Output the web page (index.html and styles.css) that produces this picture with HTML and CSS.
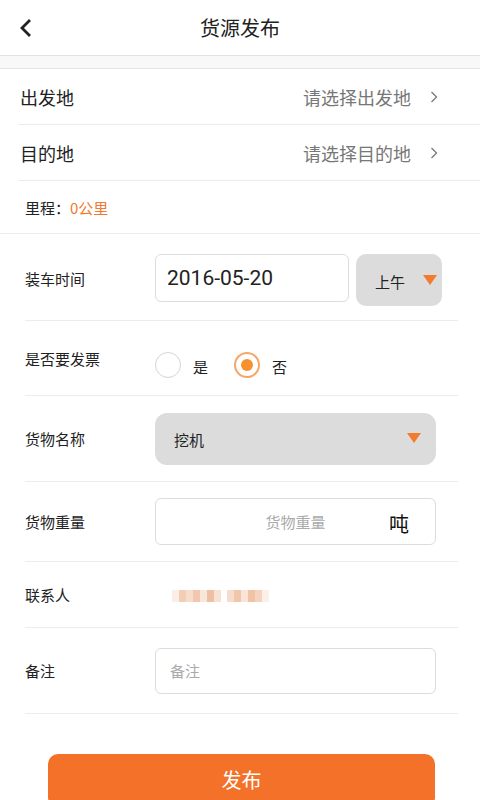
FILE: index.html
```html
<!DOCTYPE html>
<html lang="zh-CN">
<head>
  <meta charset="UTF-8" />
  <meta name="viewport" content="width=device-width, initial-scale=1.0" />
  <title>货源发布</title>
  <link rel="stylesheet" href="styles.css">
</head>
<body>
  <header class="topbar">
    <svg class="back" width="14" height="20" viewBox="0 0 14 20"><path d="M11 2 L3 10 L11 18" fill="none" stroke="#222" stroke-width="2.8"/></svg>
    <h1>货源发布</h1>
  </header>
  <div class="spacer"></div>

  <div class="addr">
    <div class="addr-row">
      <span>出发地</span>
      <span class="pick">请选择出发地
        <svg width="8" height="12" viewBox="0 0 8 12"><path d="M1.5 1 L6.5 6 L1.5 11" fill="none" stroke="#777" stroke-width="1.3"/></svg>
      </span>
    </div>
    <div class="addr-row">
      <span>目的地</span>
      <span class="pick">请选择目的地
        <svg width="8" height="12" viewBox="0 0 8 12"><path d="M1.5 1 L6.5 6 L1.5 11" fill="none" stroke="#777" stroke-width="1.3"/></svg>
      </span>
    </div>
  </div>
  <div class="distance">里程：<span class="orange">0公里</span></div>

  <form class="form">
    <div class="row row-time">
      <label>装车时间</label>
      <div class="box date">2016-05-20</div>
      <div class="select half">上午 <i class="tri"></i></div>
    </div>
    <div class="row row-bill">
      <label>是否要发票</label>
      <div class="radios">
        <span class="radio"></span><span class="opt">是</span>
        <span class="radio on"></span><span class="opt">否</span>
      </div>
    </div>
    <div class="row row-name">
      <label>货物名称</label>
      <div class="select wide">挖机 <i class="tri"></i></div>
    </div>
    <div class="row row-weight">
      <label>货物重量</label>
      <div class="box weight"><span class="ph">货物重量</span><span class="unit">吨</span></div>
    </div>
    <div class="row row-contact">
      <label>联系人</label>
      <div class="blur">
        <i style="background:#fbeee6"></i><i style="background:#f4cdb6"></i><i style="background:#f7dccb"></i><i style="background:#f3c7ad"></i><i style="background:#f9e6da"></i><i style="background:#efbfa3"></i><i style="background:#f8e2d4"></i><i class="sp"></i><i style="background:#f7dccb"></i><i style="background:#f2c6ab"></i><i style="background:#f9e4d7"></i><i style="background:#f0c3a7"></i><i style="background:#f5d3bf"></i><i style="background:#fbefe7"></i>
      </div>
    </div>
    <div class="row row-note">
      <label>备注</label>
      <div class="box note"><span class="ph">备注</span></div>
    </div>
  </form>

  <button class="submit" type="button">发布</button>
</body>
</html>
```

FILE: styles.css
```css
body {
  margin: 0;
  background: #fff;
  font-family: "Noto Sans CJK SC", "Noto Sans", sans-serif;
  color: #333;
  width: 480px;
  overflow: hidden;
}
.topbar {
  height: 55px;
  display: flex;
  align-items: center;
  justify-content: center;
  position: relative;
  border-bottom: 1px solid #e2e2e2;
}
.topbar h1 {
  margin: 0;
  font-size: 20px;
  font-weight: normal;
  color: #222;
}
.back {
  position: absolute;
  left: 19px;
  top: 18px;
}
.spacer {
  height: 12px;
  background: #f8f8f8;
  border-bottom: 1px solid #e6e6e6;
}
.addr-row {
  height: 55px;
  margin-left: 18px;
  padding: 0 42px 0 2px;
  display: flex;
  align-items: center;
  justify-content: space-between;
  border-bottom: 1px solid #ececec;
  font-size: 18px;
  color: #222;
}
.pick {
  color: #777;
  display: flex;
  align-items: center;
  gap: 19px;
}
.distance {
  height: 52px;
  display: flex;
  align-items: center;
  padding-left: 25px;
  font-size: 15px;
  color: #222;
  border-bottom: 1px solid #ececec;
}
.orange {
  color: #f07a30;
}
.form {
  margin: 0 22px 0 25px;
}
.row {
  display: flex;
  align-items: center;
  border-bottom: 1px solid #ececec;
}
.row label {
  width: 130px;
  flex-shrink: 0;
  font-size: 15px;
  color: #222;
}
.row-time { height: 84px; padding-top: 2px; }
.row-bill { height: 74px; }
.row-name { height: 85px; }
.row-weight { height: 79px; }
.row-contact { height: 65px; }
.row-note { height: 85px; }
.box {
  box-sizing: border-box;
  border: 1px solid #dcdcdc;
  border-radius: 6px;
  background: #fff;
  display: flex;
  align-items: center;
}
.date {
  width: 194px;
  height: 48px;
  padding-left: 11px;
  font-family: Roboto, "Noto Sans", sans-serif;
  font-size: 21px;
  color: #222;
}
.select {
  box-sizing: border-box;
  background: #dcdcdc;
  display: flex;
  align-items: center;
  justify-content: space-between;
  font-size: 15px;
  color: #222;
}
.half {
  width: 86px;
  height: 52px;
  margin: 3px 0 0 7px;
  border-radius: 10px;
  padding: 4px 5px 0 19px;
}
.wide {
  width: 281px;
  height: 52px;
  border-radius: 12px;
  padding: 2px 15px 0 19px;
}
.tri {
  width: 0;
  height: 0;
  border-left: 7px solid transparent;
  border-right: 7px solid transparent;
  border-top: 10px solid #f47a2c;
  margin-bottom: 4px;
}
.radios {
  display: flex;
  align-items: center;
  padding-top: 14px;
}
.radio {
  box-sizing: border-box;
  width: 26px;
  height: 26px;
  border-radius: 50%;
  border: 1.5px solid #d4d4d4;
}
.radio.on {
  border: 2px solid #f7a665;
  display: flex;
  align-items: center;
  justify-content: center;
}
.radio.on::after {
  content: "";
  width: 12px;
  height: 12px;
  border-radius: 50%;
  background: #f7902f;
}
.opt {
  font-size: 15px;
  color: #222;
  margin: 2px 26px 0 12px;
}
.weight {
  width: 281px;
  height: 47px;
  padding: 0 26px 0 46px;
}
.weight .ph {
  flex: 1;
  text-align: center;
}
.ph {
  font-size: 15px;
  color: #aaa;
}
.unit {
  font-size: 20px;
  color: #111;
  padding-top: 4px;
}
.blur {
  display: flex;
  margin-left: 17px;
  height: 12px;
  margin-top: 2px;
}
.blur i {
  width: 7px;
  height: 12px;
}
.blur i.sp {
  width: 6px;
}
.note {
  width: 281px;
  height: 46px;
  padding-left: 14px;
}
.submit {
  display: block;
  margin: 40px 0 0 48px;
  width: 387px;
  height: 54px;
  border: none;
  border-radius: 10px;
  background: #f47129;
  color: #fff;
  font-family: "Noto Sans CJK SC", sans-serif;
  font-size: 20px;
  padding: 0 0 4px;
}
```
